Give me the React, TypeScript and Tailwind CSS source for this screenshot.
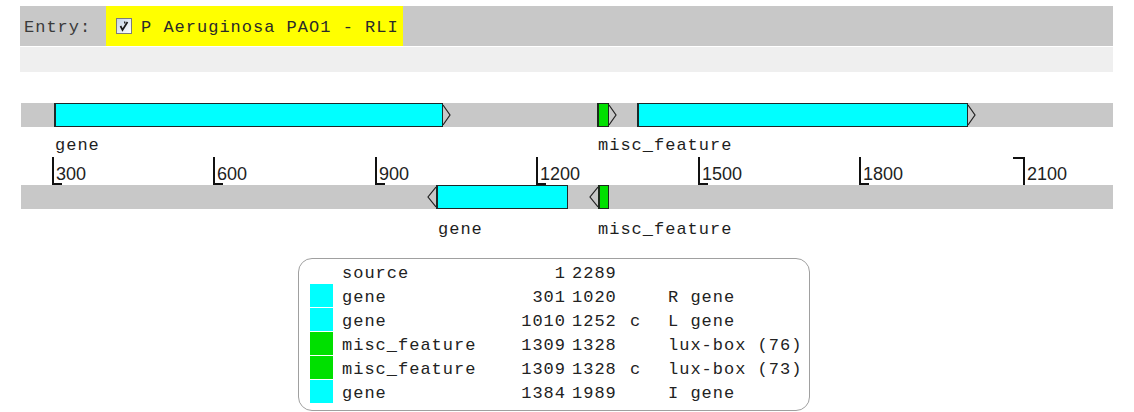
import React from "react";

type Feature = {
  left: number;
  width: number;
  color: "cyan" | "green";
  dir: "fwd" | "rev";
};

type Label = { left: number; text: string };

const mono =
  "font-['Liberation_Mono','Courier_New',monospace] text-[17px] tracking-[1px] leading-[18px]";

// pixel positions along the map, relative to the track start
const forwardFeatures: Feature[] = [
  { left: 33, width: 389, color: "cyan", dir: "fwd" },
  { left: 576, width: 12, color: "green", dir: "fwd" },
  { left: 616, width: 331, color: "cyan", dir: "fwd" },
];

const reverseFeatures: Feature[] = [
  { left: 415, width: 132, color: "cyan", dir: "rev" },
  { left: 577, width: 11, color: "green", dir: "rev" },
];

const forwardLabels: Label[] = [
  { left: 34, text: "gene" },
  { left: 577, text: "misc_feature" },
];

const reverseLabels: Label[] = [
  { left: 417, text: "gene" },
  { left: 577, text: "misc_feature" },
];

const ticks = [
  { left: 31, label: "300" },
  { left: 192, label: "600" },
  { left: 354, label: "900" },
  { left: 515, label: "1200" },
  { left: 677, label: "1500" },
  { left: 838, label: "1800" },
];

const legend = [
  { color: "", name: "source", start: "1", end: "2289", strand: "", note: "" },
  { color: "cyan", name: "gene", start: "301", end: "1020", strand: "", note: "R gene" },
  { color: "cyan", name: "gene", start: "1010", end: "1252", strand: "c", note: "L gene" },
  { color: "green", name: "misc_feature", start: "1309", end: "1328", strand: "", note: "lux-box (76)" },
  { color: "green", name: "misc_feature", start: "1309", end: "1328", strand: "c", note: "lux-box (73)" },
  { color: "cyan", name: "gene", start: "1384", end: "1989", strand: "", note: "I gene" },
];

function CheckIcon() {
  return (
    <svg width="16" height="16" viewBox="0 0 16 16" className="shrink-0">
      <defs>
        <linearGradient id="cb" x1="0" y1="0" x2="1" y2="1">
          <stop offset="0" stopColor="#c3d2e4" />
          <stop offset="1" stopColor="#ffffff" />
        </linearGradient>
      </defs>
      <rect x="0.5" y="0.5" width="15" height="15" fill="url(#cb)" stroke="#7b7b7b" />
      <path d="M4.5 8 L6.5 12 L11.5 4" fill="none" stroke="#1a1a1a" strokeWidth="1.7" />
      <path d="M8.5 3.5 L9 5.5" stroke="#1a1a1a" strokeWidth="1.3" />
    </svg>
  );
}

function Box({ f }: { f: Feature }) {
  return (
    <div className="absolute top-0 h-6" style={{ left: f.left, width: f.width }}>
      <div
        className={
          f.color === "cyan"
            ? "h-full border border-l-2 border-[#1c2a2a] bg-[#00ffff]"
            : "h-full border border-l-2 border-[#1c2a1c] bg-[#00e000]"
        }
      />
      {f.dir === "fwd" ? (
        <svg width="8" height="24" className="absolute left-full top-0">
          <path d="M0 2 L7 12 L0 22" fill="none" stroke="#222" strokeWidth="1.2" />
        </svg>
      ) : (
        <svg width="9" height="24" className="absolute right-full top-0">
          <path d="M9 2 L1 12 L9 22" fill="none" stroke="#222" strokeWidth="1.2" />
        </svg>
      )}
    </div>
  );
}

function Track({ features }: { features: Feature[] }) {
  return (
    <div className="relative h-6 bg-[#c8c8c8]">
      {features.map((f) => (
        <Box key={f.left} f={f} />
      ))}
    </div>
  );
}

export default function App() {
  return (
    <div className="w-[1134px] h-[412px] overflow-hidden bg-white text-[#1e1e1e]">
      {/* Entry bar */}
      <div className="mt-[6px] ml-[20px] w-[1093px] h-[40px] bg-[#c8c8c8] flex">
        <div className={`${mono} w-[86px] pl-[4px] pt-[4px] flex items-center text-[#3a3a3a]`}>Entry:</div>
        <div className="w-[297px] h-full bg-[#ffff00] flex items-center pl-[10px] gap-[9px]">
          <CheckIcon />
          <span className={`${mono} pt-[4px] text-[#2a2a2a]`}>P Aeruginosa PAO1 - RLI</span>
        </div>
      </div>
      <div className="mt-[1px] ml-[20px] w-[1093px] h-[25px] bg-[#efefef]" />

      {/* Map */}
      <div className="mt-[31px] ml-[21px] w-[1092px]">
        <Track features={forwardFeatures} />

        <div className="relative h-[30px]">
          {forwardLabels.map((l) => (
            <span key={l.left} className={`${mono} absolute top-[10px]`} style={{ left: l.left }}>
              {l.text}
            </span>
          ))}
        </div>

        {/* Ruler */}
        <div className="relative h-[28px] font-['Liberation_Sans',Arial,sans-serif] text-[18px] leading-[20px] text-[#222]">
          {ticks.map((t) => (
            <div key={t.label} className="absolute top-0 h-full flex" style={{ left: t.left }}>
              <div className="relative w-[2px] h-full bg-[#111]">
                <div className="absolute bottom-0 left-0 w-[10px] h-[2px] bg-[#111]" />
              </div>
              <span className="pl-[2px] pt-[7px]">{t.label}</span>
            </div>
          ))}
          <div className="absolute top-0 h-full flex left-[1002px]">
            <div className="relative w-[2px] h-full bg-[#111]">
              <div className="absolute top-0 right-0 w-[12px] h-[2px] bg-[#111]" />
            </div>
            <span className="pl-[2px] pt-[7px]">2100</span>
          </div>
        </div>

        <Track features={reverseFeatures} />

        <div className="relative h-[49px]">
          {reverseLabels.map((l) => (
            <span key={l.left} className={`${mono} absolute top-[12px]`} style={{ left: l.left }}>
              {l.text}
            </span>
          ))}
        </div>
      </div>

      {/* Legend */}
      <div className="ml-[298px] w-[512px] border border-[#a0a0a0] rounded-[14px] pt-[1px] pb-[6px] pl-[11px]">
        {legend.map((r, i) => (
          <div
            key={i}
            className={`${mono} h-6 grid grid-cols-[23px_187px_46px_64px_38px_1fr] items-start text-[#222]`}
          >
            <div
              className={
                r.color === "cyan"
                  ? "h-[23px] bg-[#00ffff]"
                  : r.color === "green"
                  ? "h-[23px] bg-[#00e000]"
                  : "h-[23px]"
              }
            />
            <span className="pl-[9px] pt-[5px] whitespace-pre">{r.name}</span>
            <span className="pt-[5px] text-right">{r.start}</span>
            <span className="pl-[6px] pt-[5px]">{r.end}</span>
            <span className="pt-[5px]">{r.strand}</span>
            <span className="pt-[5px] whitespace-pre">{r.note}</span>
          </div>
        ))}
      </div>
    </div>
  );
}
